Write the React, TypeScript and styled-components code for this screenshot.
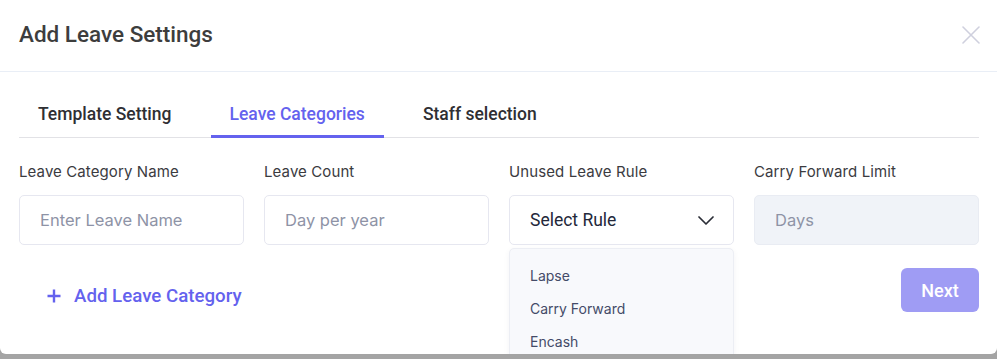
import React, { useState } from 'react';
import styled, { createGlobalStyle } from 'styled-components';

const GlobalStyle = createGlobalStyle`
    body {
        margin: 0;
        background: #a4a4a4;
        font-family: Roboto, 'Liberation Sans', sans-serif;
    }
`;

const tabs = ['Template Setting', 'Leave Categories', 'Staff selection'];
const rules = ['Lapse', 'Carry Forward', 'Encash'];

const App = () => {
    const [active, setActive] = useState(1);

    return (
        <>
            <GlobalStyle />
            <Modal>
                <Header>
                    <Title>Add Leave Settings</Title>
                    <CloseButton aria-label="close">
                        <svg width="18" height="18" viewBox="0 0 18 18">
                            <path
                                d="M1 1L17 17M17 1L1 17"
                                stroke="#cfd0de"
                                strokeWidth="1.6"
                                strokeLinecap="round"
                            />
                        </svg>
                    </CloseButton>
                </Header>
                <TabList>
                    {tabs.map((t, i) => (
                        <Tab key={t} active={i === active} onClick={() => setActive(i)}>
                            {t}
                        </Tab>
                    ))}
                </TabList>
                <Fields>
                    <Field>
                        <Label>Leave Category Name</Label>
                        <Input placeholder="Enter Leave Name" />
                    </Field>
                    <Field>
                        <Label>Leave Count</Label>
                        <Input placeholder="Day per year" />
                    </Field>
                    <Field>
                        <Label>Unused Leave Rule</Label>
                        <Select>
                            <span>Select Rule</span>
                            <svg width="16" height="9" viewBox="0 0 16 9">
                                <path
                                    d="M1 1L8 8L15 1"
                                    fill="none"
                                    stroke="#2a2d36"
                                    strokeWidth="1.7"
                                    strokeLinecap="round"
                                    strokeLinejoin="round"
                                />
                            </svg>
                        </Select>
                    </Field>
                    <Field>
                        <Label>Carry Forward Limit</Label>
                        <Input placeholder="Days" disabled />
                    </Field>
                </Fields>
                <Footer>
                    <AddButton>
                        <svg width="14" height="14" viewBox="0 0 14 14">
                            <path
                                d="M7 0.5V13.5M0.5 7H13.5"
                                stroke="#6462ee"
                                strokeWidth="2.4"
                            />
                        </svg>
                        Add Leave Category
                    </AddButton>
                    <NextButton>Next</NextButton>
                </Footer>
                <Dropdown>
                    {rules.map((r) => (
                        <Option key={r}>{r}</Option>
                    ))}
                </Dropdown>
            </Modal>
        </>
    );
};

export default App;

const Modal = styled.div`
    position: relative;
    width: 997px;
    height: 354px;
    background: #ffffff;
    border-radius: 0 0 6px 6px;
    box-sizing: border-box;
`;

const Header = styled.div`
    height: 72px;
    display: flex;
    align-items: center;
    justify-content: space-between;
    padding: 0 17px 0 19px;
    border-bottom: 1px solid #e9eef6;
    box-sizing: border-box;
`;

const Title = styled.h2`
    margin: 0 0 4px;
    font-size: 22.5px;
    font-weight: 500;
    color: #3d3d3d;
`;

const CloseButton = styled.button`
    border: none;
    background: none;
    padding: 0;
    margin-bottom: 2px;
    display: flex;
    cursor: pointer;
`;

const TabList = styled.div`
    display: flex;
    gap: 20px;
    margin: 23px 18px 0 19px;
    border-bottom: 1px solid #e2e2e6;
`;

const Tab = styled.div<{ active: boolean }>`
    padding: 9px 19px 10px;
    margin-bottom: -1px;
    font-size: 17.5px;
    line-height: 21px;
    font-weight: 500;
    color: ${({ active }) => (active ? '#6462ee' : '#2f2f33')};
    border-bottom: 3px solid ${({ active }) => (active ? '#6462ee' : 'transparent')};
    cursor: pointer;
`;

const Fields = styled.div`
    display: grid;
    grid-template-columns: repeat(4, 225px);
    gap: 20px;
    padding: 24px 18px 0 19px;
`;

const Field = styled.div`
    display: flex;
    flex-direction: column;
    gap: 13px;
`;

const Label = styled.label`
    font-family: Inter, 'Noto Sans', sans-serif;
    font-size: 15px;
    line-height: 20px;
    letter-spacing: 0.1px;
    color: #3b3b3f;
`;

const Input = styled.input`
    height: 50px;
    box-sizing: border-box;
    border: 1px solid #e6e7f0;
    border-radius: 5px;
    padding: 0 20px;
    font-family: Inter, 'Noto Sans', sans-serif;
    font-size: 16.5px;
    color: #2a2d36;
    background: #ffffff;
    outline: none;

    &::placeholder {
        color: #8e93a6;
    }

    &:disabled {
        background: #f0f3f8;
        border-color: #e9ecf3;
    }
`;

const Select = styled.div`
    height: 50px;
    box-sizing: border-box;
    border: 1px solid #e6e7f0;
    border-radius: 5px;
    padding: 0 19px 0 20px;
    display: flex;
    align-items: center;
    justify-content: space-between;
    font-size: 17.5px;
    color: #23283a;
    cursor: pointer;
`;

const Footer = styled.div`
    display: flex;
    justify-content: space-between;
    align-items: flex-start;
    margin-top: 23px;
    padding: 0 18px 0 47px;
`;

const AddButton = styled.button`
    margin-top: 16px;
    display: flex;
    align-items: center;
    gap: 13px;
    border: none;
    background: none;
    padding: 0;
    font-family: Roboto, 'Liberation Sans', sans-serif;
    font-size: 18.7px;
    line-height: 24px;
    font-weight: 500;
    color: #6462ee;
    cursor: pointer;
`;

const NextButton = styled.button`
    width: 78px;
    height: 44px;
    border: none;
    border-radius: 6px;
    background: #9f9cf4;
    color: #ffffff;
    font-family: Roboto, 'Liberation Sans', sans-serif;
    font-size: 18px;
    font-weight: 500;
    cursor: pointer;
`;

const Dropdown = styled.ul`
    position: absolute;
    left: 509px;
    top: 248px;
    width: 225px;
    height: 130px;
    box-sizing: border-box;
    margin: 0;
    padding: 10px 0 0;
    list-style: none;
    background: #f8f9fc;
    border: 1px solid #eceef4;
    border-radius: 5px;
    box-shadow: 0 2px 6px rgba(30, 40, 80, 0.05);
`;

const Option = styled.li`
    padding: 0 20px;
    height: 33px;
    line-height: 33px;
    font-family: Inter, 'Noto Sans', sans-serif;
    font-size: 14px;
    color: #444b68;
    cursor: pointer;
`;
